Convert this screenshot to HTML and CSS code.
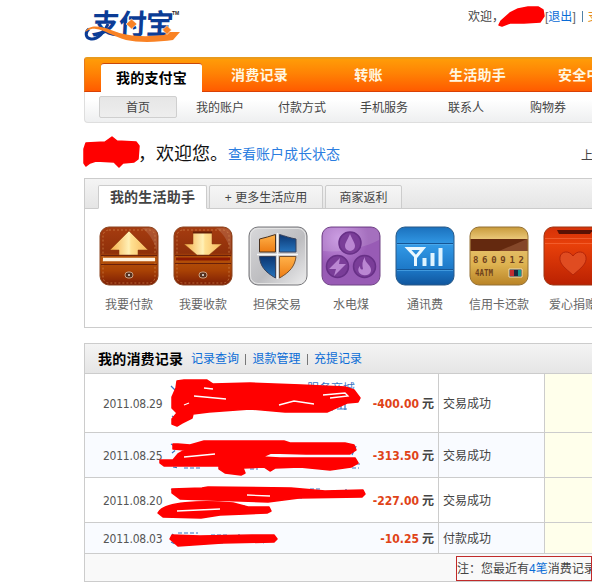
FILE: index.html
```html
<!DOCTYPE html>
<html lang="zh-CN">
<head>
<meta charset="utf-8">
<title>我的支付宝</title>
<link rel="stylesheet" href="styles.css">
</head>
<body>
<div class="page">
  <header class="top">
    <div class="logo">
      <span class="logo-text">支付宝</span><span class="tm">TM</span>
      <svg class="swoosh" width="100" height="36" viewBox="0 0 100 36">
        <path d="M24 13C21 21 13 29 7 28C1 27 1 21 5 18" fill="none" stroke="#0b3c96" stroke-width="3"/>
        <path d="M1 21C5 13 17 15 27 19C44 26 62 26 80 24L85 21L96 21L89 29C76 31 55 32 42 29C29 25 20 19 12 18C6 17 4 20 1 21Z" fill="#f98224"/>
        <path d="M47.500 8l5.500 5-5.500 5-5.500-5zM83 14.500l4.500 4.500-4.500 4.500-4.500-4.500z" fill="#f98224" stroke="#fff" stroke-width=".6"/>
      </svg>
    </div>
    <div class="user"><span>欢迎，</span><span class="user-gap"></span><span class="bracket">[</span><a>退出</a><span class="bracket">]</span><i class="bar"></i><span class="orange">支付宝</span></div>
  </header>

  <nav class="main-nav"><a class="on">我的支付宝</a><a>消费记录</a><a>转账</a><a>生活助手</a><a>安全中心</a></nav>
  <nav class="sub-nav"><a class="on">首页</a><a>我的账户</a><a>付款方式</a><a>手机服务</a><a>联系人</a><a>购物券</a></nav>

  <div class="welcome"><span class="hello">，欢迎您。</span><a>查看账户成长状态</a><span class="last">上次</span></div>

  <section class="panel apps">
    <div class="tabs"><a class="on">我的生活助手</a><a class="more">+ 更多生活应用</a><a class="shop">商家返利</a></div>
    <div class="icons">
      <div class="app"><svg width="60" height="62" viewBox="0 0 60 62">
        <defs>
          <linearGradient id="br" x2="0" y2="1"><stop offset="0" stop-color="#a63c10"/><stop offset=".45" stop-color="#8f300a"/><stop offset=".52" stop-color="#b65309"/><stop offset=".75" stop-color="#a94205"/><stop offset="1" stop-color="#7c1d05"/></linearGradient>
          <linearGradient id="cream"><stop offset="0" stop-color="#f4aa43"/><stop offset=".5" stop-color="#fff1b8"/><stop offset=".55" stop-color="#ffe193"/><stop offset="1" stop-color="#f6b85a"/></linearGradient>
          <linearGradient id="sv" x2="1" y2="1"><stop offset="0" stop-color="#d9d9db"/><stop offset=".55" stop-color="#bdbdc0"/><stop offset="1" stop-color="#eeeeef"/></linearGradient>
          <linearGradient id="or" x2="0" y2="1"><stop offset="0" stop-color="#ffb24a"/><stop offset="1" stop-color="#ed7b12"/></linearGradient>
          <linearGradient id="nb" x2="0" y2="1"><stop offset="0" stop-color="#0c3672"/><stop offset="1" stop-color="#2674bd"/></linearGradient>
          <radialGradient id="pu" cx=".3" cy=".2"><stop offset="0" stop-color="#c591df"/><stop offset="1" stop-color="#985bb5"/></radialGradient>
          <linearGradient id="bl" x2="0" y2="1"><stop offset="0" stop-color="#1b71bd"/><stop offset=".3" stop-color="#3299e6"/><stop offset=".72" stop-color="#1d79c8"/><stop offset="1" stop-color="#10569e"/></linearGradient>
          <linearGradient id="go" x2="0" y2="1"><stop offset="0" stop-color="#c89a3a"/><stop offset=".2" stop-color="#e9c676"/><stop offset=".65" stop-color="#ddb250"/><stop offset="1" stop-color="#b98326"/></linearGradient>
          <linearGradient id="re" x2="0" y2="1"><stop offset="0" stop-color="#d53108"/><stop offset=".3" stop-color="#e8400a"/><stop offset="1" stop-color="#ba2102"/></linearGradient>
        </defs>
        <rect x="1" y="1" width="58" height="58" rx="9" fill="url(#br)" stroke="#8b4520"/>
        <path d="M43 2H50q8 0 8 8V26C56 17 51 8 43 2Z" fill="#fff" opacity=".14"/>
        <rect x="4" y="4" width="52" height="53" rx="6" fill="none" stroke="#d28a51" stroke-dasharray="2 2" opacity=".65"/>
        <path d="M2 29.500H58M2 38.500H58" stroke="#69200a"/><path d="M4 33.500H56" stroke="#fff1dc" stroke-width="3.500"/>
        <path d="M30 5L49 24H39V29H20V24H11Z" fill="url(#cream)" stroke="#8a3b10" stroke-width=".5"/>
        <rect x="26" y="46" width="8" height="6" rx="3" fill="#54301e" stroke="#caa184"/><circle cx="30" cy="49" r="1" fill="#eee"/>
      </svg><span>我要付款</span></div>
      <div class="app"><svg width="60" height="62" viewBox="0 0 60 62">
        <rect x="1" y="1" width="58" height="58" rx="9" fill="url(#br)" stroke="#8b4520"/>
        <path d="M43 2H50q8 0 8 8V26C56 17 51 8 43 2Z" fill="#fff" opacity=".14"/>
        <rect x="4" y="4" width="52" height="53" rx="6" fill="none" stroke="#d28a51" stroke-dasharray="2 2" opacity=".65"/>
        <path d="M2 29.500H58M2 37.500H58" stroke="#69200a"/><path d="M3 33H57" stroke="#8b1a03" stroke-width="3"/>
        <path d="M20 6H39V18H49L36 29H24L11 18H20Z" fill="url(#cream)" stroke="#8a3b10" stroke-width=".5"/><path d="M20 6.500H39" stroke="#662006" stroke-width="2"/>
        <rect x="26" y="46" width="8" height="6" rx="3" fill="#54301e" stroke="#caa184"/><circle cx="30" cy="49" r="1" fill="#eee"/>
      </svg><span>我要收款</span></div>
      <div class="app shift"><svg width="60" height="62" viewBox="0 0 60 62">
        <rect x="1" y="1" width="58" height="58" rx="9" fill="url(#sv)" stroke="#77777b"/>
        <rect x="2.500" y="2.500" width="55" height="55" rx="7.500" fill="none" stroke="#e4e4e4"/>
        <path d="M27.500 8.500V26H11.500V13C17 12 22 10 27.500 8.500Z" fill="url(#or)" stroke="#4a321f"/>
        <path d="M31.500 8.500C37 10 42 12 48 13V26H31.500Z" fill="url(#nb)" stroke="#39435c"/>
        <path d="M11.500 30.500H27.500V52C17 46 12 40 11.500 30.500Z" fill="url(#nb)" stroke="#39435c"/>
        <path d="M31.500 30.500H48C47 40 42 46 31.500 52Z" fill="url(#or)" stroke="#76512e"/>
        <path d="M9 28.500H50M29.500 7V53" stroke="#f6f6f6" stroke-width="1.500"/>
      </svg><span>担保交易</span></div>
      <div class="app"><svg width="60" height="62" viewBox="0 0 60 62">
        <rect x="1" y="1" width="58" height="58" rx="9" fill="url(#pu)" stroke="#714486"/>
        <path d="M2 25C22 27 42 22 58 14V10q0-8-8-8H10q-8 0-8 8Z" fill="#fff" opacity=".13"/>
        <g fill="#7a3d98" stroke="#683087" stroke-width="1.500"><circle cx="29" cy="17" r="11"/><circle cx="16.500" cy="40.500" r="11"/><circle cx="43.500" cy="40.500" r="11"/></g>
        <g fill="#ba86d2"><path d="M29 8C31 13 34 17 34 20A5 5 0 0 1 24 20C24 17 27 13 29 8Z"/><path d="M19 32L8 43H15L13 50L25 38H18Z"/><path d="M44 31C43 37 51 39 50 45C49 49 45 50 42 49C37 48 36 43 39 40C39 44 41 44 42 43C41 39 41 35 44 31Z"/></g>
      </svg><span>水电煤</span></div>
      <div class="app"><svg width="60" height="62" viewBox="0 0 60 62">
        <rect x="1" y="1" width="58" height="58" rx="9" fill="url(#bl)" stroke="#285987"/>
        <path d="M2 17.500H58M2 43.500H58" stroke="#155594"/><path d="M2 18.500H58M2 44.500H58" stroke="#5ab1ee" opacity=".6"/>
        <path d="M13 22.500H28L21 31ZM20.500 29V40" fill="none" stroke="#eaf8ff" stroke-width="3"/>
        <path d="M29.500 32V40M37.500 27V40M45.500 22V40" stroke="#dff4ff" stroke-width="4"/>
      </svg><span>通讯费</span></div>
      <div class="app"><svg width="60" height="62" viewBox="0 0 60 62">
        <rect x="1" y="1" width="58" height="58" rx="9" fill="url(#go)" stroke="#947034"/>
        <path d="M1.500 13H58.500V25H1.500Z" fill="#64290f"/><path d="M30 25L58 13V25Z" fill="#995b3b" opacity=".6"/>
        <text x="4" y="36.500" class="card-num" textLength="51" lengthAdjust="spacing">860912</text>
        <text x="6" y="50" class="card-atm" textLength="18" lengthAdjust="spacingAndGlyphs">4ATM</text>
        <path d="M40 43H53V51H40Z" fill="#1b293e" stroke="#f2ddb2"/><path d="M41 44H45V50H41Z" fill="#c22d30"/><path d="M49 44H52V50H49Z" fill="#19988d"/>
      </svg><span>信用卡还款</span></div>
      <div class="app"><svg width="60" height="62" viewBox="0 0 60 62">
        <rect x="1" y="1" width="58" height="58" rx="9" fill="url(#re)" stroke="#9d3512"/>
        <path d="M2 12.500H58M2 17.500H58" stroke="#ff794c" opacity=".5"/><path d="M14 4H50L47 8H16Z" fill="#5a1205"/>
        <path d="M30 49C22 42 16 38 17 31C18 25 26 24 30 30C34 24 42 25 43 31C44 38 38 42 30 49Z" fill="#e04c21" stroke="#b52509"/>
      </svg><span>爱心捐赠</span></div>
    </div>
  </section>

  <section class="panel records">
    <div class="rec-head"><b>我的消费记录</b><a>记录查询</a><i></i><a>退款管理</a><i></i><a>充提记录</a></div>
    <div class="row r1"><span class="date">2011.08.29</span><span class="desc"><a>服务商城</a></span><span class="amt"><b>-400.00</b> 元</span><span class="st">交易成功</span><span class="act"></span></div>
    <div class="row r2 alt"><span class="date">2011.08.25</span><span class="desc"></span><span class="amt"><b>-313.50</b> 元</span><span class="st">交易成功</span><span class="act"></span></div>
    <div class="row r3"><span class="date">2011.08.20</span><span class="desc"></span><span class="amt"><b>-227.00</b> 元</span><span class="st">交易成功</span><span class="act"></span></div>
    <div class="row r4 alt"><span class="date">2011.08.03</span><span class="desc"></span><span class="amt"><b>-10.25</b> 元</span><span class="st">付款成功</span><span class="act"></span></div>
    <div class="foot"><div class="note">注：您最近有<a>4笔</a>消费记录</div></div>
  </section>

  <svg class="marker" width="592" height="584" viewBox="0 0 592 584">
    <g fill="none" stroke="#3975c4" stroke-width="1.200">
      <path d="M171 386l4 4M172 416l3 2M290 385v3M328 410h5M337 409h10M341 403v6M345 404v6" />
      <path d="M171 444l5 3M172 453l5-4M352 455l5-11M356 447l-4 3M173 467l6 1M184 468h17M250 469h8M296 467h16M352 468h7M356 464h4" stroke-dasharray="4 2"/>
      <path d="M171 489l4 2M286 498h16M310 489h12M331 491h4M346 489v6M241 506h5M172 534l4 3M178 533h20M211 535h16M239 534v4M171 542l4 2M219 543h5M263 543l5-3" stroke-dasharray="4 2"/>
    </g>
    <g fill="#f00" stroke="#f00" stroke-width="1.500" stroke-linejoin="round">
      <path d="M499 25L501 21L510 13L518 9L528 7L538 7L543 10L544 16L540 22L524 23L510 23L502 26Z"/>
      <path d="M86 143L105 142L112 137L117 141L136 142L139 146L138 159L134 162L123 163L119 167L114 162L96 161L90 163L86 166L84 163L84 149Z"/>
      <path d="M177 381L184 380L207 380L213 384L250 383L301 385L322 386L345 387L354 390L360 398L358 402L347 403L327 412L285 412L250 409L209 412L193 414L192 418L182 423L177 426L172 424L172 419L177 413L172 408L172 397L176 388Z"/>
      <path d="M173 444L178 444L190 445L204 441L250 441L284 441L290 443L345 443L354 445L356 450L350 454L306 454L271 453L262 457L280 458L355 458L358 463L351 467L330 470L300 467L275 468L270 471L264 467L243 468L245 473L241 475L225 473L219 469L219 466L164 466L160 463L160 460L173 460L178 454L185 450L173 449Z"/>
      <path d="M172 489L202 488L208 487L291 488L325 491L363 490L365 494L362 497L299 498L268 502L180 499L172 493Z"/>
      <path d="M158 513C163 502 201 500 233 503L248 507L269 507L271 511L267 513L245 514L220 515L201 518L163 517Z"/>
      <path d="M172 535L200 536L252 535L274 535L277 539L274 542L222 543L178 546L170 539Z"/>
    </g>
    <path d="M194 396L226 399M204 388L213 389M189 403L184 405M279 405L294 401L314 404M323 395L345 393L348 396L330 398M184 457L215 454M247 495L270 496M177 511L220 509" stroke="#fff" stroke-width="1.300" fill="none"/>
  </svg>
</div>
</body>
</html>
```
FILE: styles.css
```css
* { box-sizing: border-box; }
body {
  margin: 0;
  background: #fff;
  color: #444;
  font: 12px/16px "Liberation Sans", "Noto Sans CJK SC", sans-serif;
  overflow: hidden;
}
.page { position: relative; width: 592px; height: 584px; padding-left: 84px; overflow: hidden; white-space: nowrap; }
a { color: #0a6cd6; }

.top { display: flex; height: 57px; }
.logo { position: relative; flex: none; width: 384px; padding: 5px 0 0 8px; display: flex; align-items: flex-start; }
.logo-text { font: bold 28px/34px "Noto Sans CJK SC", sans-serif; color: #0b3c96; transform: skewX(-3deg); letter-spacing: -1px; }
.tm { font: bold 5px/8px "Liberation Sans", sans-serif; color: #222; margin: 4px 0 0 -1px; }
.swoosh { position: absolute; left: 0; top: 11px; }
.user { display: flex; padding-top: 9px; flex: none; }
.user-gap { width: 41px; }
.bracket { color: #666; }
.bar { width: 1px; height: 11px; margin: 2px 5px 0 6px; background: #4f82a8; }
.orange { color: #e58e20; }

.main-nav {
  display: flex; width: 520px; height: 35px; padding-left: 11px;
  border-top: 2px solid #e99a1c; border-bottom: 1px solid #d94106; border-left: 1px solid #e5791c;
  border-radius: 3px 0 0 0;
  background: linear-gradient(#ff9c08, #ff8204 45%, #ff5b00);
}
.main-nav a { flex: none; width: 109px; text-align: center; font-weight: bold; font-size: 14px; line-height: 33px; color: #fff7e0; letter-spacing: .2px; }
.main-nav .on { width: 101px; height: 30px; margin: 4px 3px 0 5px; border-top: 1px solid #c9480b; border-radius: 3px 3px 0 0; background: #fff; color: #000; line-height: 28px; }
.sub-nav {
  display: flex; width: 520px; height: 31px; padding: 4px 0 0 12px;
  border-left: 1px solid #dedede; border-bottom: 1px solid #dedede; border-radius: 0 0 0 4px;
  background: linear-gradient(#fff 25%, #eeeff0);
}
.sub-nav a { flex: none; width: 82px; text-align: center; line-height: 24px; color: #444; }
.sub-nav .on { width: 78px; height: 22px; margin: 0 2px; line-height: 22px; border: 1px solid #cfcfcf; border-radius: 2px; background: linear-gradient(#e6e6e6, #eee); }

.welcome { display: flex; height: 55px; padding: 18px 0 0 54px; line-height: 26px; }
.welcome > * { flex: none; }
.hello { width: 90px; font-size: 18px; color: #111; }
.welcome a { width: 353px; font-size: 14px; color: #2b7de0; }
.last { padding-top: 2px; color: #444; }

.panel { width: 520px; border: 1px solid #ccc; }
.apps { height: 150px; }
.tabs { display: flex; height: 30px; padding: 6px 0 0 13px; border-bottom: 1px solid #ccc; background: linear-gradient(#f4f4f4, #e5e5e5); }
.tabs a { flex: none; height: 24px; border: 1px solid #ccc; border-radius: 2px 2px 0 0; background: linear-gradient(#f6f6f6, #ebebeb); color: #444; text-align: center; line-height: 24px; }
.tabs .on { width: 109px; background: #fff; border-bottom-color: #fff; font-weight: bold; font-size: 14px; line-height: 22px; letter-spacing: .2px; }
.tabs .more { width: 114px; margin-left: 2px; }
.tabs .shop { width: 77px; margin-left: 2px; }
.icons { display: flex; padding: 17px 0 0 7px; }
.app { flex: none; width: 74px; display: flex; flex-direction: column; align-items: center; color: #666; }
.app svg { flex: none; }
.app.shift svg { margin-left: 1px; }
.app span { margin-top: 9px; }
.card-num { font: bold 9px "DejaVu Sans Mono", monospace; fill: #70421c; }
.card-atm { font: bold 8px "DejaVu Sans Mono", monospace; fill: #70421c; }

.records { margin-top: 15px; height: 239px; }
.rec-head { display: flex; height: 30px; padding: 1px 0 0 13px; align-items: center; border-bottom: 1px solid #ccc; background: linear-gradient(#f4f4f4, #e5e5e5); }
.rec-head b { width: 93px; font-size: 14px; color: #000; letter-spacing: .2px; }
.rec-head i { width: 1px; height: 11px; margin: 0 6px; background: #777; }
.rec-head i + a { padding-left: .5px; }
.row { display: grid; grid-template-columns: 84px 198px 72px 106px 60px; border-bottom: 1px solid #ccc; background: #fff; }
.row > span { display: flex; align-items: center; }
.row.alt { background: #f9fbff; }
.r1 { height: 59px; }
.r2, .r3 { height: 45px; }
.r4 { height: 31px; }
.row .date { padding: 2px 0 0 18px; font-family: "DejaVu Sans Condensed", "DejaVu Sans", sans-serif; font-stretch: condensed; font-size: 12px; letter-spacing: -.25px; color: #555; }
.row .desc { align-items: flex-start; padding: 7px 0 0 138px; }
.desc a { color: #3975c4; }
.row .amt { justify-content: flex-end; gap: 3px; padding: 2px 4px 0 0; font-weight: bold; border-right: 1px solid #ccc; }
.amt b { color: #e04317; font-family: "DejaVu Sans Condensed", "DejaVu Sans", sans-serif; font-stretch: condensed; }
.row .st { padding: 2px 0 0 4px; border-right: 1px solid #ccc; }
.row .act { background: #ffffeb; }
.foot { height: 27px; padding: 2px 0 0 371px; background: #f9f9f9; }
.note { width: 136px; height: 25px; border: 1px solid #c02a2a; line-height: 24px; font-size: 12px; color: #444; overflow: hidden; }

.marker { position: absolute; left: 0; top: 0; pointer-events: none; }
```
